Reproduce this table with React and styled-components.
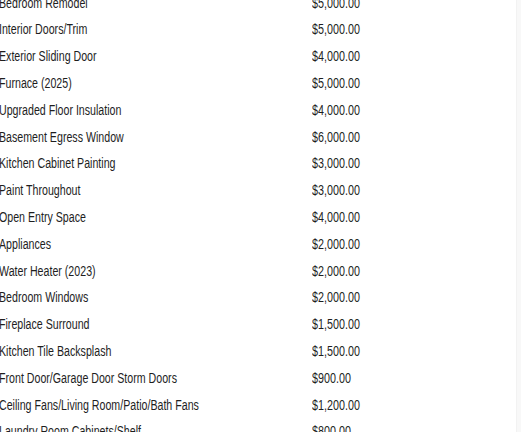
import React from "react";
import styled, { createGlobalStyle } from "styled-components";

const Global = createGlobalStyle`
  html, body { margin: 0; padding: 0; background: #ffffff; }
  body { overflow: hidden; }
`;

const Page = styled.div`
  width: 521px;
  height: 432px;
  overflow: hidden;
  display: flex;
  background: #ffffff;
`;

const Table = styled.div`
  flex: 1;
  display: flex;
  flex-direction: column;
  margin-top: -10.4px;
`;

const Edge = styled.div`
  width: 4px;
  background: #f8f8f8;
  border-left: 1px solid #f2f2f2;
`;

const Row = styled.div`
  display: grid;
  grid-template-columns: 312px 1fr;
  height: 26.8px;
  line-height: 26.8px;
  font-family: "Liberation Sans", Arial, sans-serif;
  font-size: 14px;
  color: #1e1e1e;
  white-space: nowrap;
`;

const Cell = styled.div`
  margin-left: ${(p) => p.$shift || 0}px;
`;

const Narrow = styled.span`
  display: inline-block;
  transform: scaleX(${(p) => p.$scale || 0.76});
  transform-origin: left center;
`;

const items = [
  ["Bedroom Remodel", "$5,000.00"],
  ["Interior Doors/Trim", "$5,000.00"],
  ["Exterior Sliding Door", "$4,000.00"],
  ["Furnace (2025)", "$5,000.00"],
  ["Upgraded Floor Insulation", "$4,000.00"],
  ["Basement Egress Window", "$6,000.00"],
  ["Kitchen Cabinet Painting", "$3,000.00"],
  ["Paint Throughout", "$3,000.00"],
  ["Open Entry Space", "$4,000.00"],
  ["Appliances", "$2,000.00"],
  ["Water Heater (2023)", "$2,000.00"],
  ["Bedroom Windows", "$2,000.00"],
  ["Fireplace Surround", "$1,500.00"],
  ["Kitchen Tile Backsplash", "$1,500.00"],
  ["Front Door/Garage Door Storm Doors", "$900.00"],
  ["Ceiling Fans/Living Room/Patio/Bath Fans", "$1,200.00"],
  ["Laundry Room Cabinets/Shelf", "$800.00"],
];

export default function App() {
  return (
    <>
      <Global />
      <Page>
        <Table>
          {items.map(([name, price]) => (
            <Row key={name}>
              <Cell $shift={-1}>
                <Narrow>{name}</Narrow>
              </Cell>
              <Cell>
                <Narrow $scale={0.77}>{price}</Narrow>
              </Cell>
            </Row>
          ))}
        </Table>
        <Edge />
      </Page>
    </>
  );
}
